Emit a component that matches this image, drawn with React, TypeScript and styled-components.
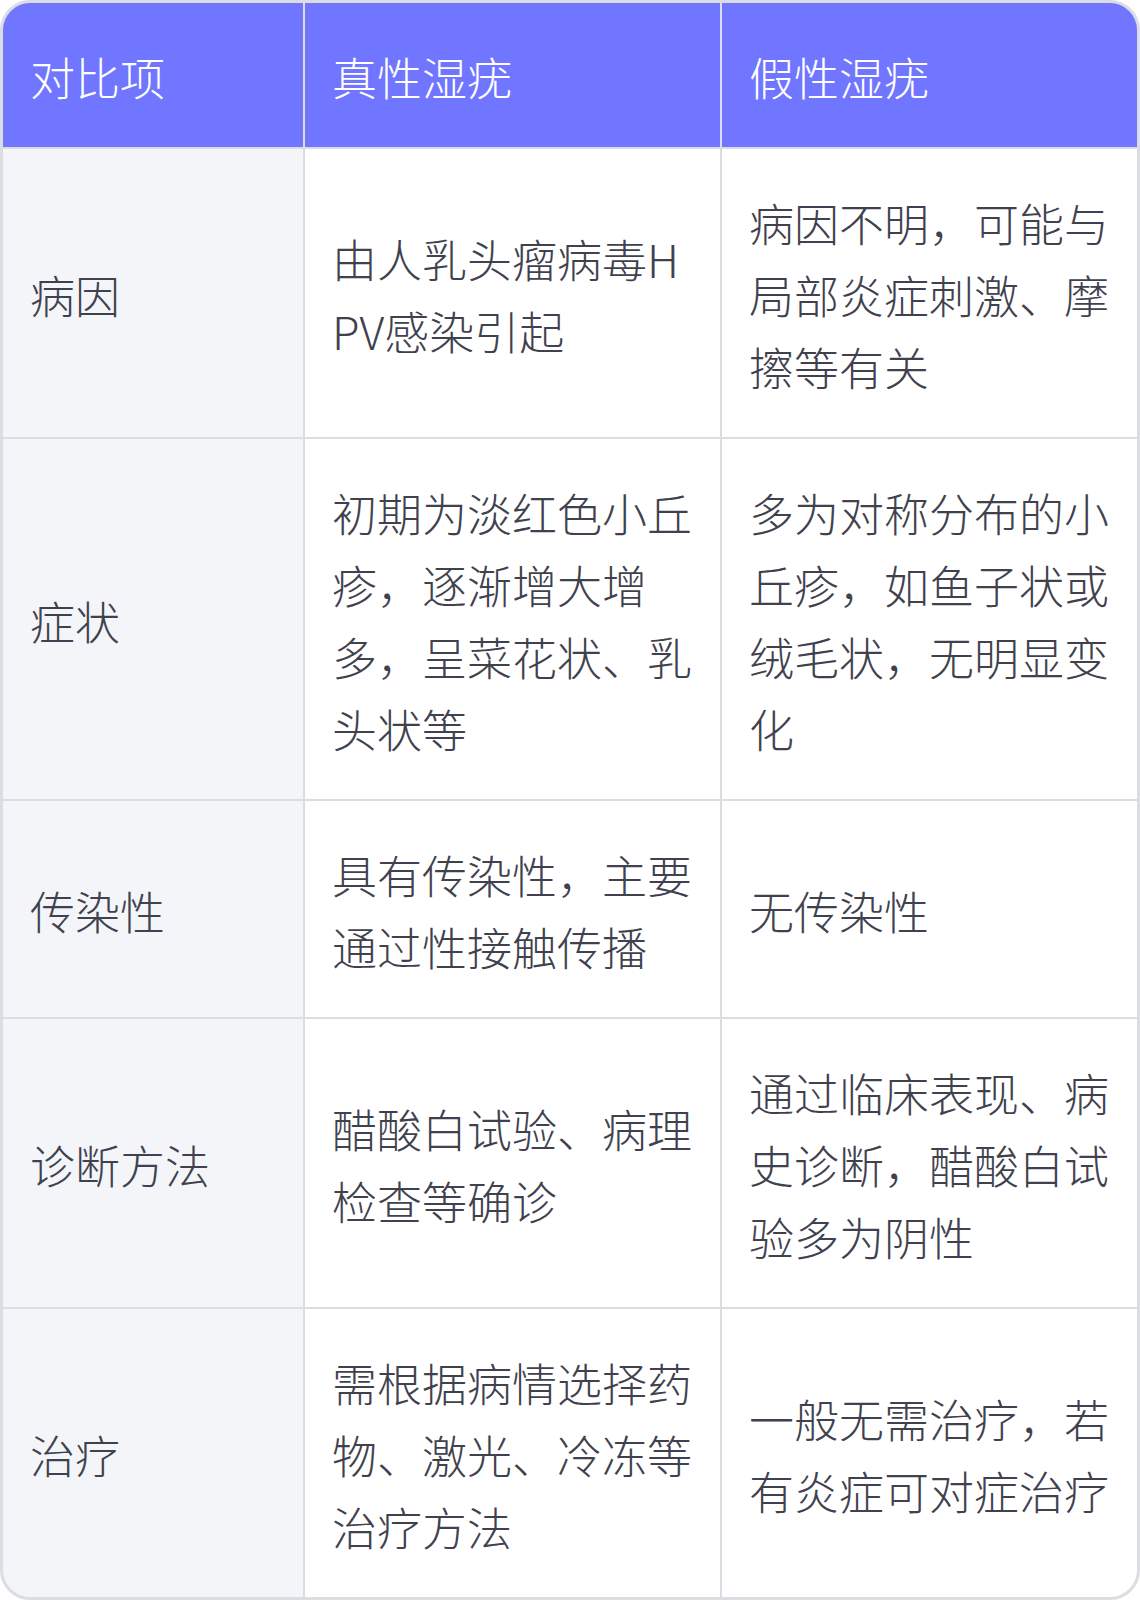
import styled, { createGlobalStyle } from 'styled-components';

const GlobalStyle = createGlobalStyle`
  html, body {
    margin: 0;
    padding: 0;
    background: #fff;
  }
  body {
    font-family: "Noto Sans CJK SC", "Noto Sans", sans-serif;
  }
`;

const rows = [
  {
    item: '病因',
    real: '由人乳头瘤病毒HPV感染引起',
    fake: '病因不明，可能与局部炎症刺激、摩擦等有关',
  },
  {
    item: '症状',
    real: '初期为淡红色小丘疹，逐渐增大增多，呈菜花状、乳头状等',
    fake: '多为对称分布的小丘疹，如鱼子状或绒毛状，无明显变化',
  },
  {
    item: '传染性',
    real: '具有传染性，主要通过性接触传播',
    fake: '无传染性',
  },
  {
    item: '诊断方法',
    real: '醋酸白试验、病理检查等确诊',
    fake: '通过临床表现、病史诊断，醋酸白试验多为阴性',
  },
  {
    item: '治疗',
    real: '需根据病情选择药物、激光、冷冻等治疗方法',
    fake: '一般无需治疗，若有炎症可对症治疗',
  },
];

const App = () => {
  return (
    <>
      <GlobalStyle />
      <Table>
        <HeadCell>对比项</HeadCell>
        <HeadCell>真性湿疣</HeadCell>
        <HeadCell>假性湿疣</HeadCell>
        {rows.map((row) => (
          <Row key={row.item}>
            <Cell $label>{row.item}</Cell>
            <Cell>{row.real}</Cell>
            <Cell>{row.fake}</Cell>
          </Row>
        ))}
      </Table>
    </>
  );
};

export default App;

const Table = styled.div`
  width: 1140px;
  box-sizing: border-box;
  display: grid;
  grid-template-columns: 300px 415px 415px;
  gap: 2px;
  border: 3px solid #dcdde3;
  border-radius: 30px;
  overflow: hidden;
  background: #dcdde3;
`;

const Row = styled.div`
  display: contents;
`;

const BaseCell = styled.div`
  display: flex;
  align-items: center;
  padding: 38px 27px 34px;
  font-size: 45px;
  font-weight: 300;
  line-height: 72px;
  word-break: break-all;
`;

const HeadCell = styled(BaseCell)`
  background: #7076ff;
  color: #fff;
  padding: 38px 27px 34px;
`;

const Cell = styled(BaseCell)<{ $label?: boolean }>`
  background: ${(p) => (p.$label ? '#f4f5f9' : '#fff')};
  color: #3f424e;
`;
